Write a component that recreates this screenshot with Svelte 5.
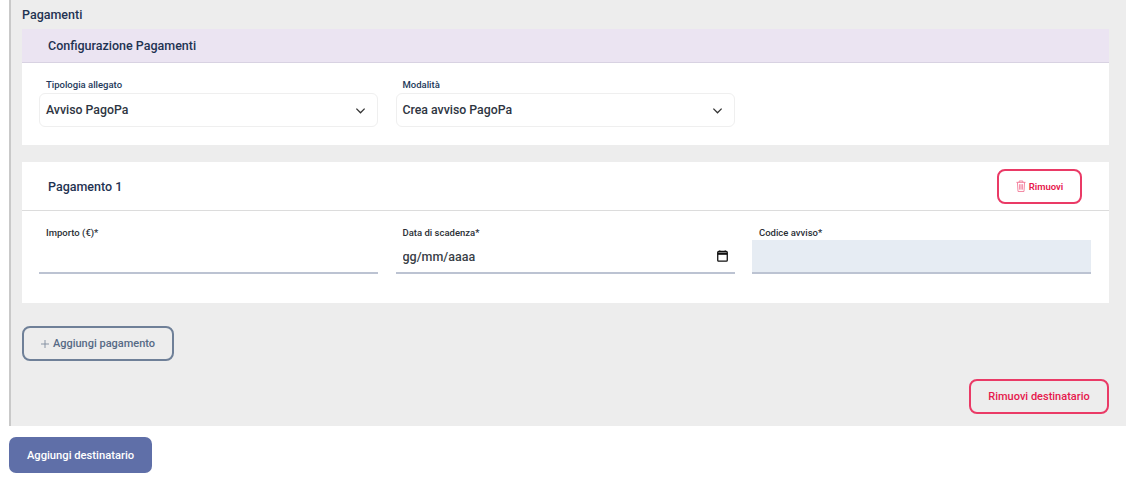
<script lang="ts">
    const selects = [
        { label: 'Tipologia allegato', value: 'Avviso PagoPa' },
        { label: 'Modalità', value: 'Crea avviso PagoPa' }
    ];
    let importo = $state('');
    let scadenza = $state('');
</script>

<div class="panel">
    <h3 class="title">Pagamenti</h3>

    <section class="card">
        <header class="head lilac"><h4>Configurazione Pagamenti</h4></header>
        <div class="fields config">
            {#each selects as s}
                <div class="field">
                    <span class="label blue">{s.label}</span>
                    <div class="select">
                        <span>{s.value}</span>
                        <svg width="11" height="11" viewBox="0 0 12 12" fill="none" stroke="#333" stroke-width="1.4">
                            <path d="M1.5 4 6 8.5 10.5 4" />
                        </svg>
                    </div>
                </div>
            {/each}
        </div>
    </section>

    <section class="card second">
        <header class="head plain">
            <h4>Pagamento 1</h4>
            <button class="btn danger small">
                <svg width="10" height="12" viewBox="0 0 11 13" fill="none" stroke="#f27a98" stroke-width="1">
                    <path d="M.5 2.5h10M3.5 2.5V1h4v1.5M1.6 2.5l.6 10h6.6l.6-10M4 4.5v6M5.5 4.5v6M7 4.5v6" />
                </svg>
                Rimuovi
            </button>
        </header>
        <div class="fields pay">
            <div class="field">
                <label class="label" for="importo">Importo (€)*</label>
                <input id="importo" class="line" bind:value={importo} />
            </div>
            <div class="field">
                <label class="label" for="scadenza">Data di scadenza*</label>
                <div class="line date">
                    <input id="scadenza" placeholder="gg/mm/aaaa" bind:value={scadenza} />
                    <svg width="11" height="12" viewBox="0 0 12 13" fill="none" stroke="#111" stroke-width="1.4">
                        <rect x=".8" y="1.6" width="10.4" height="10.6" rx="1" />
                        <path d="M.8 4h10.4" stroke-width="2.4" />
                        <path d="M3 .4v1.6M9 .4v1.6" />
                    </svg>
                </div>
            </div>
            <div class="field">
                <label class="label" for="codice">Codice avviso*</label>
                <input id="codice" class="line disabled" disabled />
            </div>
        </div>
    </section>

    <button class="btn outline add">
        <svg width="8" height="8" viewBox="0 0 9 9" stroke="#7d8a9c" stroke-width="1"><path d="M4.5 0v9M0 4.5h9" /></svg>
        Aggiungi pagamento
    </button>

    <div class="actions">
        <button class="btn danger wide">Rimuovi destinatario</button>
    </div>
</div>

<button class="btn primary">Aggiungi destinatario</button>

<style>
    :global(body) {
        background: #fff;
        font-family: 'Roboto', 'Liberation Sans', sans-serif;
        overflow: hidden;
    }

    h3,
    h4 {
        margin: 0;
    }

    .panel {
        margin-left: 9px;
        width: 1117px;
        height: 426px;
        box-sizing: border-box;
        padding: 0 17px 0 11px;
        background: #ededed;
        border-left: 2px solid #c9c9c9;
    }

    .title {
        height: 29px;
        line-height: 29px;
        font-size: 12.5px;
        font-weight: 500;
        color: #1f3352;
    }

    .card {
        background: #fff;
    }

    .second {
        margin-top: 17px;
        height: 141px;
    }

    .head {
        display: flex;
        align-items: center;
        justify-content: space-between;
        box-sizing: border-box;
        padding: 0 27px 0 26px;
    }

    .head h4 {
        font-size: 12.5px;
        font-weight: 500;
        color: #1f3352;
    }

    .lilac {
        height: 34px;
        background: #ebe4f2;
        border-bottom: 1px solid #d8d2e2;
    }

    .plain {
        height: 49px;
        border-bottom: 1px solid #dcdcdc;
    }

    .fields {
        display: grid;
        grid-template-columns: repeat(3, 339px);
        column-gap: 17.5px;
        padding: 0 17px;
    }

    .config {
        height: 82px;
        padding-top: 15px;
        box-sizing: border-box;
    }

    .pay {
        padding-top: 15px;
    }

    .label {
        display: block;
        height: 14px;
        line-height: 14px;
        padding-left: 7px;
        font-size: 9.5px;
        font-weight: 500;
        color: #2b2f36;
    }

    .blue {
        color: #23395a;
    }

    .config .label {
        margin-bottom: 1px;
    }

    .select {
        display: flex;
        align-items: center;
        justify-content: space-between;
        box-sizing: border-box;
        height: 34px;
        padding: 0 11px 0 6px;
        border: 1px solid #efefef;
        border-radius: 6px;
        font-size: 12.3px;
        font-weight: 500;
        color: #2e3542;
    }

    .line {
        display: block;
        box-sizing: border-box;
        width: 100%;
        height: 34px;
        padding: 0 7px;
        border: 0;
        border-bottom: 2px solid #bcc3d2;
        background: transparent;
        outline: none;
    }

    .date {
        display: flex;
        align-items: center;
        justify-content: space-between;
    }

    .date input {
        flex: 1;
        border: 0;
        outline: none;
        padding: 0;
        background: transparent;
        font: inherit;
        font-size: 12.5px;
        font-weight: 500;
    }

    .date input::placeholder {
        color: #3a3f47;
        opacity: 1;
    }

    .disabled {
        background: #e6ecf3;
    }

    .btn {
        display: flex;
        align-items: center;
        justify-content: center;
        box-sizing: border-box;
        font-family: inherit;
        font-weight: 500;
        background: transparent;
        cursor: pointer;
    }

    .danger {
        border: 2px solid #ea3a66;
        border-radius: 8px;
        color: #e6184c;
    }

    .small {
        width: 85px;
        height: 35px;
        gap: 3px;
        font-size: 9.5px;
        font-weight: 600;
    }

    .wide {
        width: 140px;
        height: 35px;
        font-size: 11px;
    }

    .outline {
        border: 2px solid #6f8098;
        border-radius: 8px;
        color: #566a85;
        font-size: 11px;
    }

    .add {
        gap: 4px;
        width: 152px;
        height: 35px;
        margin-top: 23px;
    }

    .actions {
        display: flex;
        justify-content: flex-end;
        margin-top: 18px;
    }

    .primary {
        width: 143px;
        height: 36px;
        margin: 11px 0 0 9px;
        border: 0;
        border-radius: 7px;
        background: #5f6fa8;
        color: #fff;
        font-size: 11.2px;
    }
</style>
